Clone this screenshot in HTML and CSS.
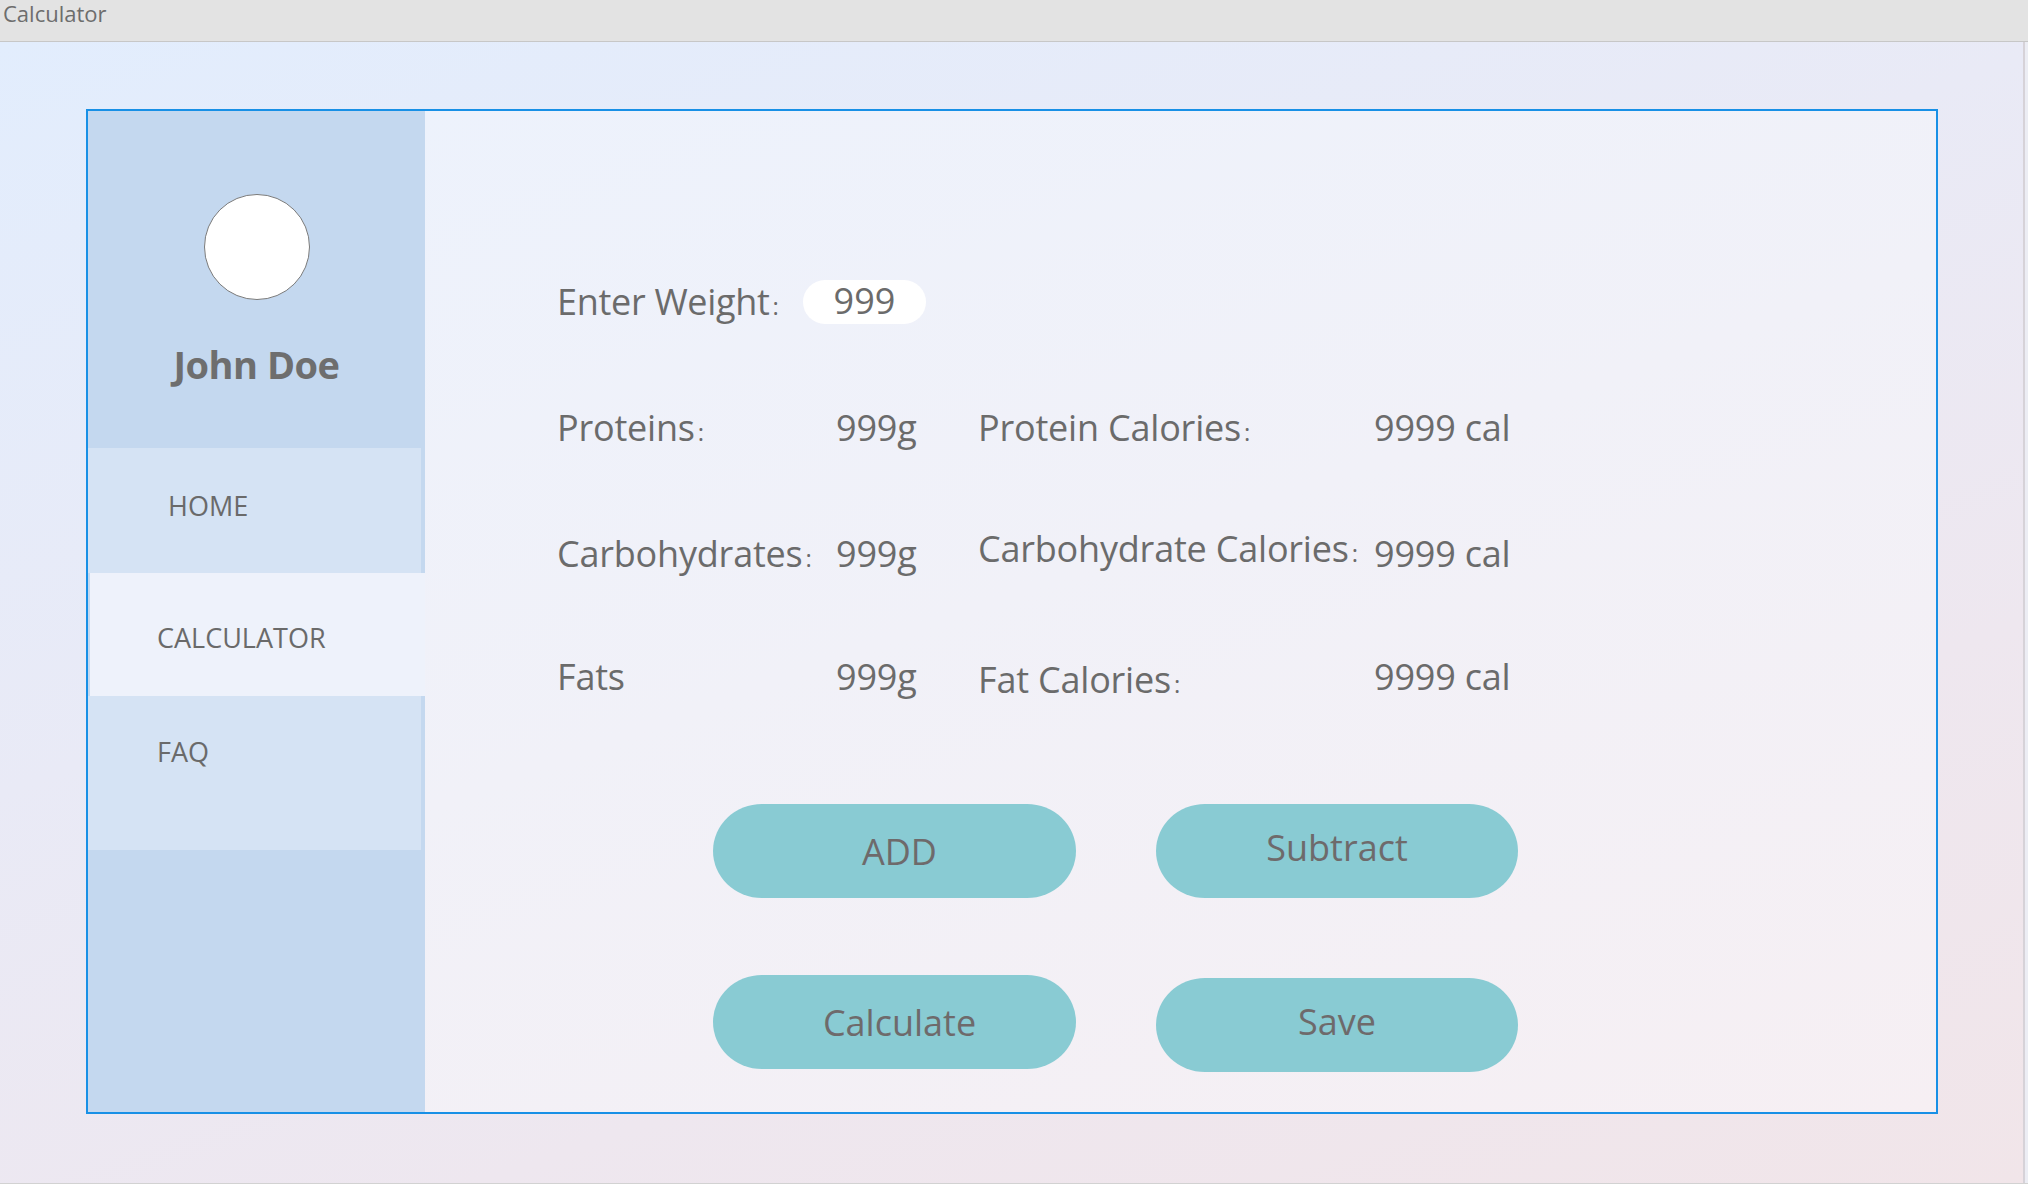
FILE: index.html
```html
<!DOCTYPE html>
<html lang="en">
<head>
<meta charset="utf-8">
<title>Calculator</title>
<link rel="stylesheet" href="styles.css">
</head>
<body>
<div class="titlebar">Calculator</div>
<div class="window">
  <div class="stage">
    <div class="panel">
      <aside class="sidebar">
        <div class="avatar"></div>
        <div class="name">John Doe</div>
        <nav class="nav">
          <div class="nav-item home">HOME</div>
          <div class="nav-item active">CALCULATOR</div>
          <div class="nav-item faq">FAQ</div>
        </nav>
      </aside>
      <main class="content">
        <div class="weight-row">
          <div class="weight-label">Enter Weight<span class="colon">:</span></div>
          <div class="pill-input">999</div>
        </div>
        <div class="macros">
          <div class="cell">Proteins<span class="colon">:</span></div>
          <div class="cell">999g</div>
          <div class="cell">Protein Calories<span class="colon">:</span></div>
          <div class="cell">9999 cal</div>

          <div class="cell">Carbohydrates<span class="colon">:</span></div>
          <div class="cell">999g</div>
          <div class="cell up5">Carbohydrate Calories<span class="colon">:</span></div>
          <div class="cell">9999 cal</div>

          <div class="cell">Fats</div>
          <div class="cell">999g</div>
          <div class="cell down3">Fat Calories<span class="colon">:</span></div>
          <div class="cell">9999 cal</div>
        </div>
        <div class="buttons">
          <button class="btn left">ADD</button>
          <button class="btn lift">Subtract</button>
          <button class="btn left">Calculate</button>
          <button class="btn save lift">Save</button>
        </div>
      </main>
    </div>
  </div>
  <div class="edge"></div>
</div>
</body>
</html>
```
FILE: styles.css
```css
* { box-sizing: border-box; }

html, body {
  margin: 0;
  padding: 0;
  width: 2028px;
  height: 1184px;
  overflow: hidden;
  font-family: "Open Sans", "Liberation Sans", sans-serif;
  color: #6b6b6b;
}

.titlebar {
  height: 42px;
  background: #e3e3e3;
  border-bottom: 1px solid #c7c7c7;
  font-size: 22px;
  line-height: 27px;
  padding-left: 3px;
  color: #6d6d6d;
}

.window {
  height: 1142px;
  display: flex;
  background: linear-gradient(160deg, #e2edfd 0%, #e9eaf6 40%, #eee7ef 70%, #f1e5e9 100%);
  border-bottom: 1px solid #d2d2d2;
}

.stage {
  flex: 1;
  padding: 67px 0 0 86px;
}

.edge {
  width: 5px;
  border-left: 2px solid #d6d2d8;
  background: #ecedf4;
}

.panel {
  width: 1852px;
  height: 1005px;
  border: 2px solid #1890e6;
  display: flex;
}

.sidebar {
  width: 337px;
  background: #c4d8ef;
  display: flex;
  flex-direction: column;
  align-items: stretch;
}

.avatar {
  width: 106px;
  height: 106px;
  border-radius: 50%;
  background: #ffffff;
  border: 1px solid #7a7a7a;
  margin: 83px auto 0;
}

.name {
  margin-top: 45px;
  height: 38px;
  font-size: 38px;
  line-height: 38px;
  font-weight: 700;
  text-align: center;
  color: #6e6e6e;
  letter-spacing: -0.5px;
}

.nav {
  margin-top: 65px;
  display: flex;
  flex-direction: column;
}

.nav-item {
  font-size: 27px;
  line-height: 27px;
  color: #6a6a6a;
  background: #d5e3f4;
  width: 333px;
}

.nav-item.home {
  height: 125px;
  padding: 44px 0 0 80px;
}

.nav-item.active {
  height: 123px;
  margin-left: 2px;
  width: 335px;
  background: #eef2fb;
  padding: 51px 0 0 67px;
}

.nav-item.faq {
  height: 154px;
  padding: 42px 0 0 69px;
}

.content {
  flex: 1;
  background: linear-gradient(160deg, #edf2fc 0%, #f1f1f8 45%, #f6eff3 100%);
  padding: 169px 0 0 132px;
  font-size: 36px;
  line-height: 36px;
}

.weight-row {
  display: flex;
  align-items: center;
  height: 44px;
}

.weight-label {
  width: 246px;
  letter-spacing: -0.3px;
  padding-top: 3px;
}

.colon {
  font-size: 24px;
  margin-left: 3px;
}

.pill-input {
  width: 123px;
  height: 44px;
  border-radius: 22px;
  background: #ffffff;
  text-align: center;
  line-height: 42px;
}

.macros {
  margin-top: 86px;
  display: grid;
  grid-template-columns: 279px 142px 396px auto;
  grid-template-rows: 126px 123px 36px;
  align-items: start;
  letter-spacing: -0.2px;
}

.cell {
  white-space: nowrap;
}

.up5 { margin-top: -5px; }
.down3 { margin-top: 3px; }

.buttons {
  margin: 109px 0 0 156px;
  display: grid;
  grid-template-columns: 363px 362px;
  grid-template-rows: 94px 94px;
  column-gap: 80px;
  row-gap: 77px;
}

.btn {
  font-family: "Open Sans", "Liberation Sans", sans-serif;
  font-size: 36px;
  color: #6e6a6b;
  background: #89cbd3;
  border: none;
  border-radius: 49px / 47px;
  height: 94px;
  padding: 0;
  line-height: 36px;
}

.btn.left { padding-left: 10px; padding-top: 2px; }
.btn.lift { padding-bottom: 6px; }
.btn.save { margin-top: 3px; }
```
